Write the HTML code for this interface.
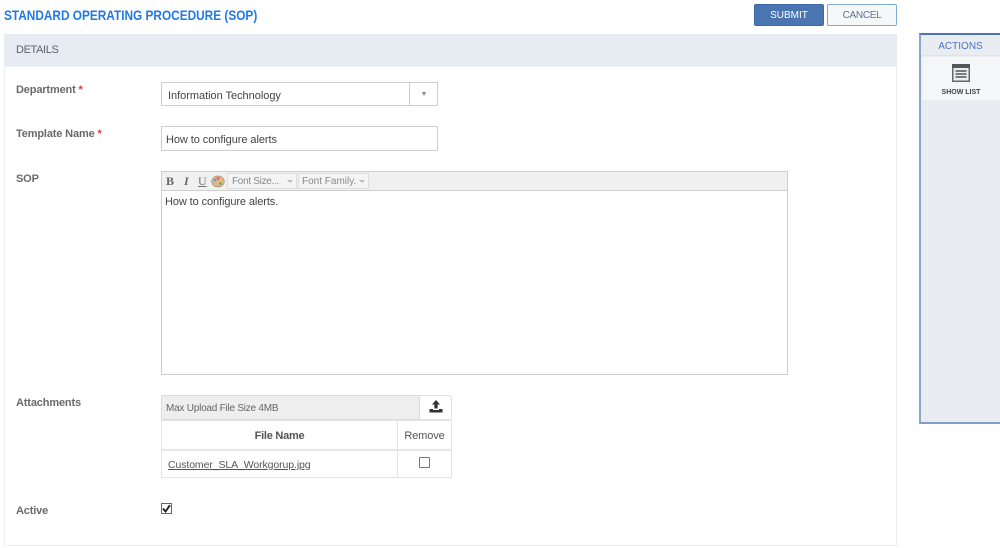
<!DOCTYPE html>
<html><head><meta charset="utf-8">
<style>
html,body{margin:0;padding:0;background:#fff}
body{width:1000px;height:548px;overflow:hidden}
#w{width:1000px;height:548px;position:relative;overflow:hidden;font-family:"Liberation Sans",sans-serif;color:#444;font-size:11px;filter:blur(.3px);background:#fff}
.a{position:absolute;box-sizing:border-box;white-space:nowrap}
.lbl{color:#6a6a6a;font-weight:bold;font-size:11px;letter-spacing:-.15px;left:16px}
.req{color:#e33;font-weight:bold}
</style></head><body><div id="w">
<div class="a" style="left:4px;top:6px;font-size:14px;line-height:18px;color:#1f7ae6;font-weight:bold;transform-origin:0 0;transform:scaleX(.845)">STANDARD OPERATING PROCEDURE (SOP)</div>

<div class="a" style="left:754px;top:4px;width:70px;height:22px;background:#4a75b1;border:1px solid #3d69a8;border-radius:2px;color:#fff;font-size:10px;line-height:21px;text-align:center">SUBMIT</div>
<div class="a" style="left:827px;top:4px;width:70px;height:22px;background:#f6f7f9;border:1px solid #7eaad4;border-radius:2px;color:#5f7390;font-size:10px;line-height:21px;text-align:center;letter-spacing:-.3px">CANCEL</div>

<!-- panel -->
<div class="a" style="left:4px;top:34px;width:893px;height:512px;border:1px solid #efefef;border-top:0"></div>
<div class="a" style="left:4px;top:34px;width:893px;height:33px;background:#e7ebf2;border-bottom:1px solid #eef0f4;color:#5c6570;font-size:11px;line-height:33px;padding-left:12px;letter-spacing:-.37px">DETAILS</div>

<div class="a lbl" style="top:84px;line-height:13px">Department <span class="req">*</span></div>
<div class="a" style="left:161px;top:82px;width:277px;height:24px;border:1px solid #cfcfcf"></div>
<div class="a" style="left:168px;top:89px;font-size:11px;line-height:14px;letter-spacing:-.03px;color:#444">Information Technology</div>
<div class="a" style="left:409px;top:83px;width:1px;height:22px;background:#cfcfcf"></div>
<div class="a" style="left:422px;top:92px;width:0;height:0;border-left:2.5px solid transparent;border-right:2.5px solid transparent;border-top:4px solid #888"></div>

<div class="a lbl" style="top:128px;line-height:13px">Template Name <span class="req">*</span></div>
<div class="a" style="left:161px;top:126px;width:277px;height:25px;border:1px solid #cfcfcf"></div>
<div class="a" style="left:166px;top:133px;font-size:11px;line-height:14px;letter-spacing:-.07px;color:#444">How to configure alerts</div>

<div class="a lbl" style="top:173px;line-height:13px">SOP</div>
<div class="a" style="left:161px;top:171px;width:627px;height:204px;border:1px solid #cfcfcf"></div>
<div class="a" style="left:162px;top:172px;width:625px;height:19px;background:#f0f0f0;border-bottom:1px solid #cfcfcf"></div>
<div class="a" style="left:166px;top:175px;font:bold 12px/13px 'Liberation Serif',serif;color:#666">B</div>
<div class="a" style="left:184px;top:175px;font:italic bold 12px/13px 'Liberation Serif',serif;color:#666">I</div>
<div class="a" style="left:198px;top:175px;font:12px/13px 'Liberation Serif',serif;color:#777;text-decoration:underline">U</div>
<svg class="a" style="left:211px;top:175px" width="14" height="13" viewBox="0 0 14 13"><ellipse cx="7" cy="6.5" rx="6.3" ry="5.5" fill="#e0b48c" stroke="#b08d70" stroke-width=".7"/><circle cx="4" cy="5" r="1.3" fill="#4aa7e0"/><circle cx="7" cy="3.5" r="1.3" fill="#e35d5d"/><circle cx="10" cy="5" r="1.3" fill="#e7c64b"/><circle cx="9.5" cy="8.5" r="1.3" fill="#5bb55b"/></svg>
<div class="a" style="left:227px;top:173px;width:70px;height:16px;background:#f4f4f4;border:1px solid #ddd;color:#8a8a8a;font-size:10px;line-height:15px;padding-left:4px;letter-spacing:-.3px">Font Size...</div>
<div class="a" style="left:287px;top:180px;width:0;height:0;border-left:3px solid transparent;border-right:3px solid transparent;border-top:3px solid #bbb"></div>
<div class="a" style="left:298px;top:173px;width:71px;height:16px;background:#f4f4f4;border:1px solid #ddd;color:#8a8a8a;font-size:10px;line-height:15px;padding-left:3px">Font Family.</div>
<div class="a" style="left:359px;top:180px;width:0;height:0;border-left:3px solid transparent;border-right:3px solid transparent;border-top:3px solid #bbb"></div>
<div class="a" style="left:165px;top:195px;font-size:11px;line-height:14px;letter-spacing:-.1px;color:#444">How to configure alerts.</div>

<div class="a lbl" style="top:397px;line-height:13px">Attachments</div>
<div class="a" style="left:161px;top:395px;width:259px;height:25px;background:#eee;border:1px solid #dcdcdc;color:#666;font-size:10px;line-height:25px;padding-left:4px;letter-spacing:-.23px">Max Upload File Size 4MB</div>
<div class="a" style="left:420px;top:395px;width:32px;height:25px;background:#fff;border:1px solid #e2e2e2;border-left:0;border-radius:0 3px 3px 0"></div>
<svg class="a" style="left:429px;top:400px" width="14" height="13" viewBox="0 0 14 13"><path d="M7 0 L11 4.5 H8.6 V8.5 H5.4 V4.5 H3 Z" fill="#333"/><path d="M0.5 9 H4 V10 H10 V9 H13.5 V12.5 H0.5 Z" fill="#333"/></svg>
<div class="a" style="left:161px;top:420px;width:291px;height:58px;border:1px solid #e4e4e4"></div>
<div class="a" style="left:162px;top:449px;width:289px;height:2px;background:#e6e6e6"></div>
<div class="a" style="left:397px;top:421px;width:1px;height:56px;background:#e4e4e4"></div>
<div class="a" style="left:162px;top:429px;width:235px;text-align:center;font-size:11px;line-height:14px;font-weight:bold;color:#555;letter-spacing:-.24px">File Name</div>
<div class="a" style="left:398px;top:429px;width:53px;text-align:center;font-size:11px;line-height:14px;color:#555;letter-spacing:-.1px">Remove</div>
<div class="a" style="left:168px;top:458px;font-size:10.5px;line-height:14px;color:#555;text-decoration:underline;letter-spacing:-.1px">Customer_SLA_Workgorup.jpg</div>
<div class="a" style="left:419px;top:457px;width:11px;height:11px;border:1px solid #777;border-radius:1px;background:#fff"></div>

<div class="a lbl" style="top:505px;line-height:13px">Active</div>
<div class="a" style="left:161px;top:503px;width:11px;height:11px;border:1px solid #666;background:#fff"></div>
<svg class="a" style="left:162px;top:504px" width="9" height="9" viewBox="0 0 9 9"><path d="M1 4.5 L3.5 7.5 L8 1.2" fill="none" stroke="#222" stroke-width="1.9"/></svg>

<!-- actions -->
<div class="a" style="left:919px;top:33px;width:81px;height:391px;background:#e9ecf0;border-top:2px solid #4a75b8;border-left:2px solid #8aa5cf;border-bottom:2px solid #7f9dca"></div>
<div class="a" style="left:921px;top:35px;width:79px;height:21px;background:#e9ecf0;border-bottom:1px solid #dfe2e7;color:#4a75c4;font-size:10px;line-height:23px;text-align:center">ACTIONS</div>
<div class="a" style="left:922px;top:57px;width:78px;height:43px;background:#f5f6f8"></div>
<svg class="a" style="left:952px;top:64px" width="18" height="18" viewBox="0 0 18 18"><rect x=".75" y=".75" width="16.5" height="16.5" fill="#eceded" stroke="#666" stroke-width="1.5"/><rect x="0" y="0" width="18" height="4" fill="#555"/><path d="M3.5 7 H14.5 M3.5 10 H14.5 M3.5 13 H14.5" stroke="#555" stroke-width="1.5"/></svg>
<div class="a" style="left:922px;top:86px;width:78px;text-align:center;font-size:7px;font-weight:bold;line-height:12px;color:#444;padding-top:0;margin-top:0;transform:translateY(1px)">SHOW LIST</div>
</div></body></html>
